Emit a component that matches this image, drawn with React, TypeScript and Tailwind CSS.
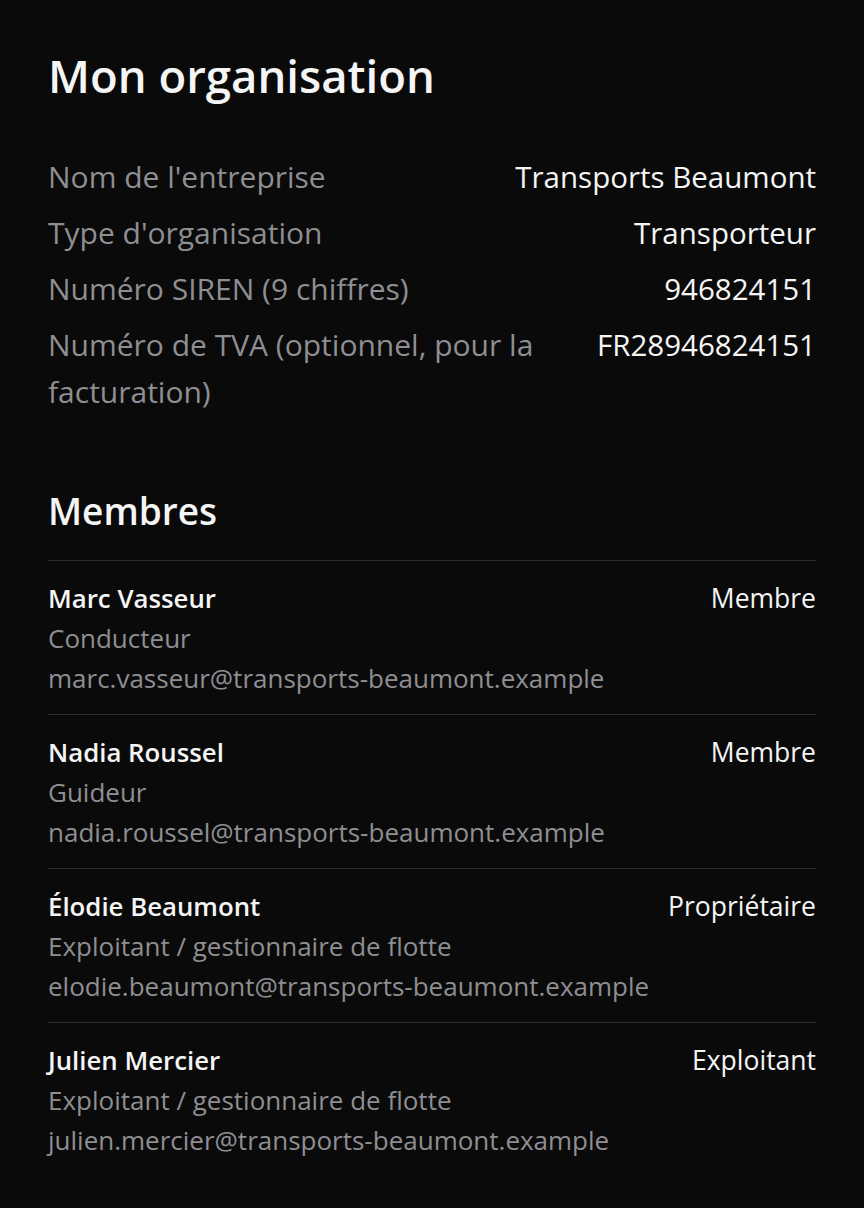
import React from 'react';

const details = [
  { label: "Nom de l'entreprise", value: 'Transports Beaumont' },
  { label: "Type d'organisation", value: 'Transporteur' },
  { label: 'Numéro SIREN (9 chiffres)', value: '946824151' },
  { label: 'Numéro de TVA (optionnel, pour la facturation)', value: 'FR28946824151' },
];

const members = [
  { name: 'Marc Vasseur', job: 'Conducteur', email: 'marc.vasseur@transports-beaumont.example', role: 'Membre' },
  { name: 'Nadia Roussel', job: 'Guideur', email: 'nadia.roussel@transports-beaumont.example', role: 'Membre' },
  { name: 'Élodie Beaumont', job: 'Exploitant / gestionnaire de flotte', email: 'elodie.beaumont@transports-beaumont.example', role: 'Propriétaire' },
  { name: 'Julien Mercier', job: 'Exploitant / gestionnaire de flotte', email: 'julien.mercier@transports-beaumont.example', role: 'Exploitant' },
];

export default function App() {
  return (
    <div className="min-h-screen bg-[#0a0a0a] text-[#f5f5f5] font-['Segoe_UI','Open_Sans',sans-serif]">
      <div className="px-12 pt-12 pb-10">
        <h1 className="text-[45.5px] leading-[54px] font-semibold">Mon organisation</h1>

        <dl className="mt-[51px] flex flex-col gap-[9px]">
          {details.map((d) => (
            <div key={d.label} className="flex gap-6 leading-[47px]">
              <dt className="flex-1 min-w-0 text-[30px] text-[#8e8e93]">{d.label}</dt>
              <dd className="shrink-0 whitespace-nowrap text-right text-[29.5px]">{d.value}</dd>
            </div>
          ))}
        </dl>

        <h2 className="mt-[74px] text-[37px] leading-[43px] font-semibold">Membres</h2>

        <ul className="mt-[28px]">
          {members.map((m) => (
            <li key={m.email} className="border-t border-[#2e2e33] pt-[17px] pb-[16px] flex justify-between gap-6 text-[26px] leading-[40px]">
              <div className="min-w-0">
                <div className="font-semibold text-[25.8px]">{m.name}</div>
                <div className="text-[#8e8e93]">{m.job}</div>
                <div className="text-[#8e8e93] whitespace-nowrap">{m.email}</div>
              </div>
              <div className="shrink-0 text-[26.5px]">{m.role}</div>
            </li>
          ))}
        </ul>
      </div>
    </div>
  );
}
